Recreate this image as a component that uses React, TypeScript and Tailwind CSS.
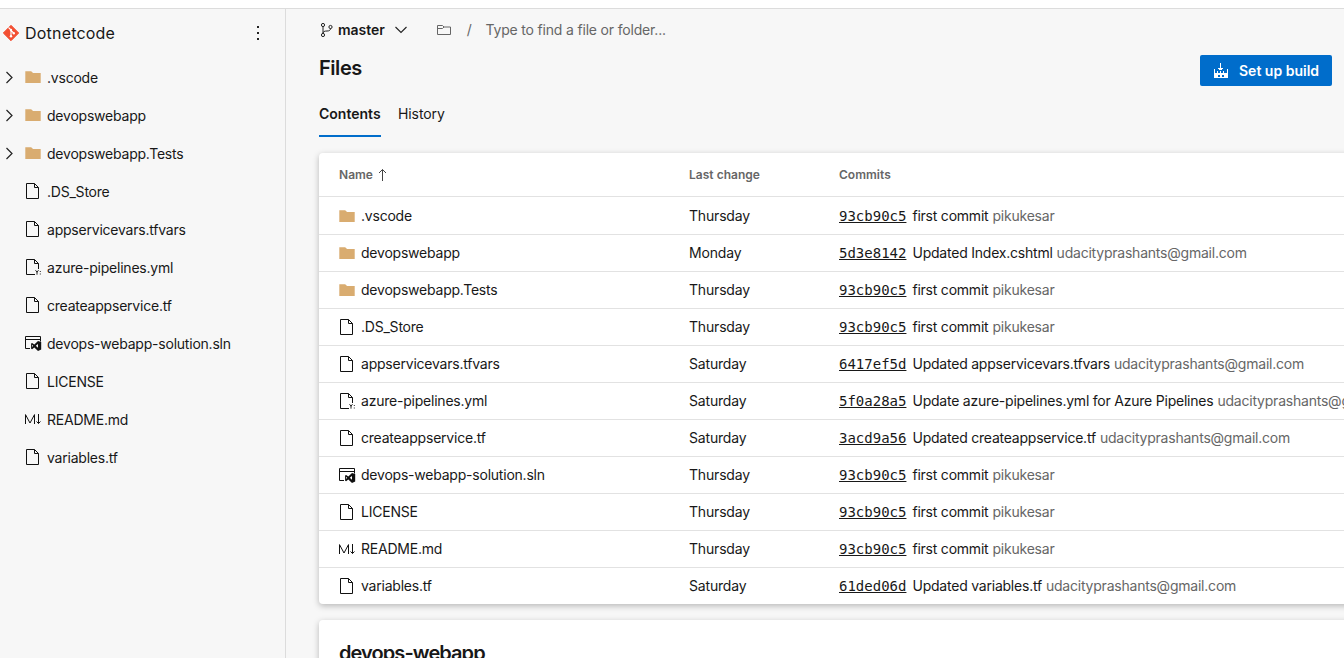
import React from 'react';

type Kind = 'folder' | 'file' | 'yml' | 'sln' | 'md';

interface Entry {
  name: string;
  kind: Kind;
  day: string;
  hash: string;
  message: string;
  author: string;
}

const UDACITY = 'udacityprashants@gmail.com';

const entries: Entry[] = [
  { name: '.vscode', kind: 'folder', day: 'Thursday', hash: '93cb90c5', message: 'first commit', author: 'pikukesar' },
  { name: 'devopswebapp', kind: 'folder', day: 'Monday', hash: '5d3e8142', message: 'Updated Index.cshtml', author: UDACITY },
  { name: 'devopswebapp.Tests', kind: 'folder', day: 'Thursday', hash: '93cb90c5', message: 'first commit', author: 'pikukesar' },
  { name: '.DS_Store', kind: 'file', day: 'Thursday', hash: '93cb90c5', message: 'first commit', author: 'pikukesar' },
  { name: 'appservicevars.tfvars', kind: 'file', day: 'Saturday', hash: '6417ef5d', message: 'Updated appservicevars.tfvars', author: UDACITY },
  { name: 'azure-pipelines.yml', kind: 'yml', day: 'Saturday', hash: '5f0a28a5', message: 'Update azure-pipelines.yml for Azure Pipelines', author: UDACITY },
  { name: 'createappservice.tf', kind: 'file', day: 'Saturday', hash: '3acd9a56', message: 'Updated createappservice.tf', author: UDACITY },
  { name: 'devops-webapp-solution.sln', kind: 'sln', day: 'Thursday', hash: '93cb90c5', message: 'first commit', author: 'pikukesar' },
  { name: 'LICENSE', kind: 'file', day: 'Thursday', hash: '93cb90c5', message: 'first commit', author: 'pikukesar' },
  { name: 'README.md', kind: 'md', day: 'Thursday', hash: '93cb90c5', message: 'first commit', author: 'pikukesar' },
  { name: 'variables.tf', kind: 'file', day: 'Saturday', hash: '61ded06d', message: 'Updated variables.tf', author: UDACITY },
];

function EntryIcon({ kind }: { kind: Kind }) {
  if (kind === 'folder') {
    return (
      <svg className="h-[18px] w-[18px] shrink-0" viewBox="0 0 18 18">
        <path d="M1.300 3.300h5.700q.5 0 .8.400l1.200 1.300h7.700V15H1.300z" fill="#d9ac70" />
      </svg>
    );
  }
  if (kind === 'sln') {
    return (
      <svg className="h-[18px] w-[18px] shrink-0" viewBox="0 0 18 18" fill="none" stroke="#111">
        <path d="M6 14.500H1.500V2.500h15V7.500M1.500 5.500h15" />
        <path d="M14 6.900l3.200 1.200v7.400l-3.200 1.400-3.700-3.300-2.200 1.700-1-.6V9.500l1-.6 2.200 1.700zM14 10l-2.200 1.800 2.200 1.900zM8.100 10.700v2.200l1.100-1.100z" fill="#111" fillRule="evenodd" stroke="none" />
      </svg>
    );
  }
  if (kind === 'md') {
    return (
      <svg className="h-[18px] w-[18px] shrink-0" viewBox="0 0 18 18" fill="none" stroke="#111">
        <path d="M1.500 14V4.600L6 13 10.500 4.600V14M14.500 4v9.500M12.500 11.500l2 2 2-2" />
      </svg>
    );
  }
  return (
    <svg className="h-[18px] w-[18px] shrink-0" viewBox="0 0 18 18" fill="none" stroke="#111">
      {kind === 'file' ? <path d="M2.500 1.500h8l4 4v11h-12z" /> : <path d="M11 16.500H2.500v-15h8l4 4V11" />}
      <path d="M10.500 1.500v4h4" />
      {kind === 'yml' && <path d="M11.500 12.200l1.500 2 1.500-2M13 14v2.700M16.300 13v1M16.300 15.500v1" strokeWidth=".9" />}
    </svg>
  );
}

function Sidebar() {
  return (
    <aside className="flex w-[286px] shrink-0 flex-col border-r border-[#dcdcdc]">
      <div className="flex h-[50px] items-center pb-0.5">
        <svg className="ml-[3px] h-4 w-4" viewBox="0 0 16 16">
          <path d="M8 .3L15.700 8 8 15.700.3 8z" fill="#f34f32" stroke="#f34f32" strokeLinejoin="round" />
          <path d="M5.500 2.500L8 5v6M8 5.500L10.700 8" stroke="#fff" fill="none" strokeWidth="1.100" />
          <circle cx="8" cy="5" r="1.200" fill="#fff" />
          <circle cx="8" cy="11.300" r="1.200" fill="#fff" />
          <circle cx="10.800" cy="8.200" r="1.200" fill="#fff" />
        </svg>
        <span className="ml-1.5 text-base tracking-[0.2px]">Dotnetcode</span>
        <svg className="mr-[18px] ml-auto h-[18px] w-[18px]" viewBox="0 0 18 18" fill="#222">
          <path d="M8 2h2v2H8zM8 8h2v2H8zM8 14h2v2H8z" />
        </svg>
      </div>
      {entries.map((e) => (
        <div key={e.name} className="flex h-[38px] items-center">
          <span className="flex w-6 pl-[5px]">
            {e.kind === 'folder' && (
              <svg className="h-3.5 w-2.5" viewBox="0 0 10 14" fill="none" stroke="#222" strokeWidth="1.200">
                <path d="M1.500 1l5.500 5.500L1.500 12" />
              </svg>
            )}
          </span>
          <span className="pb-0.5">
            <EntryIcon kind={e.kind} />
          </span>
          <span className="ml-[5px] whitespace-nowrap">{e.name}</span>
        </div>
      ))}
    </aside>
  );
}

export default function App() {
  return (
    <div className="flex h-[658px] w-[1344px] flex-col overflow-hidden bg-[#f7f7f7] font-['Inter',sans-serif] text-sm tracking-[-0.22px] text-[#181818]">
      <div className="h-[9px] shrink-0 border-b border-[#dcdcdc] bg-white" />
      <div className="flex min-h-0 flex-1">
        <Sidebar />
        <main className="flex min-w-0 flex-1 flex-col pl-[33px]">
          <div className="flex h-[42px] shrink-0 items-center">
            <svg className="h-4 w-4" viewBox="0 0 16 16" fill="none" stroke="#222">
              <circle cx="4" cy="3" r="1.600" />
              <circle cx="4" cy="13" r="1.600" />
              <circle cx="11.500" cy="5" r="1.600" />
              <path d="M4 4.500v7M11.500 6.500c0 2-1.500 2.500-3.500 2.500-2.500 0-4 .5-4 2.500" />
            </svg>
            <span className="ml-[3px] font-semibold tracking-[-0.05px]">master</span>
            <svg className="ml-2.5 h-2 w-3" viewBox="0 0 12 8" fill="none" stroke="#222" strokeWidth="1.100">
              <path d="M.5 1L6 6.500 11.500 1" />
            </svg>
            <svg className="ml-[30px] h-4 w-4" viewBox="0 0 16 16" fill="none" stroke="#666">
              <path d="M.5 3.500h5l1.500 1.500h6.500v7.500H.5zM.5 6.500H5.500l1.500-1.500" />
            </svg>
            <span className="ml-3.5 text-[#666]">/</span>
            <span className="ml-3.5 tracking-[-0.18px] text-[#666]">Type to find a file or folder...</span>
          </div>
          <div className="flex h-[38px] shrink-0 items-start justify-between pr-3">
            <h1 className="pt-0.5 text-xl leading-[30px] font-semibold tracking-[-0.45px]">Files</h1>
            <button className="mt-1 flex h-[31px] w-[132px] items-center rounded-[2px] bg-[#006dcb] pl-[13px] font-semibold tracking-normal text-white">
              <svg className="h-4 w-4" viewBox="0 0 16 16" fill="#fff" fillRule="evenodd">
                <path d="M7 0h1v5h2v1H9v1H6V6H5V5h2zM1 6h1v4h2V8h1v2h2V8h1v2h2V8h1v2h3V6h1v9H1zM5 12v2h2v-2zM9 12v2h2v-2z" />
              </svg>
              <span className="ml-2.5">Set up build</span>
            </button>
          </div>
          <nav className="flex h-12 shrink-0 gap-[17px]">
            <span className="h-12 w-[62px] border-b-2 border-[#006dcb] pt-[15px] font-semibold tracking-normal">Contents</span>
            <span className="pt-[15px] tracking-[-0.1px]">History</span>
          </nav>
          <section className="mt-4 h-[451px] w-[1040px] shrink-0 rounded bg-white shadow-[0_2px_6px_rgba(0,0,0,0.26)]">
            <div className="flex h-11 items-center border-b border-[#e2e2e2] pl-5 text-xs font-semibold tracking-[0.02px] text-[#666]">
              <span className="flex w-[350px] items-center">
                Name
                <svg className="ml-[5px] h-3.5 w-2" viewBox="0 0 8 14" fill="none" stroke="#444">
                  <path d="M4.500 13V1.500M1 5l3.500-3.500L8 5" />
                </svg>
              </span>
              <span className="w-[150px]">Last change</span>
              <span>Commits</span>
            </div>
            {entries.map((e, i) => (
              <div key={e.name} className={`flex items-center border-b pl-[19px] whitespace-nowrap ${i === 0 ? 'h-[38px]' : 'h-[37px]'} ${i < 10 ? 'border-[#e2e2e2]' : 'border-transparent'}`}>
                <div className="flex w-[351px] shrink-0 items-center">
                  <EntryIcon kind={e.kind} />
                  <span className="ml-[5px]">{e.name}</span>
                </div>
                <span className="w-[150px] shrink-0 tracking-[-0.18px]">{e.day}</span>
                <a className="font-['DejaVu_Sans_Mono',monospace] tracking-normal underline">{e.hash}</a>
                <span className="ml-1.5">{e.message}</span>
                <span className="ml-1 text-[#666]">{e.author}</span>
              </div>
            ))}
          </section>
          <section className="mt-4 h-40 w-[1040px] shrink-0 rounded bg-white pt-[18px] pl-5 shadow-[0_2px_6px_rgba(0,0,0,0.26)]">
            <h2 className="text-xl leading-[30px] font-semibold tracking-[-0.92px]">devops-webapp</h2>
          </section>
        </main>
      </div>
    </div>
  );
}
